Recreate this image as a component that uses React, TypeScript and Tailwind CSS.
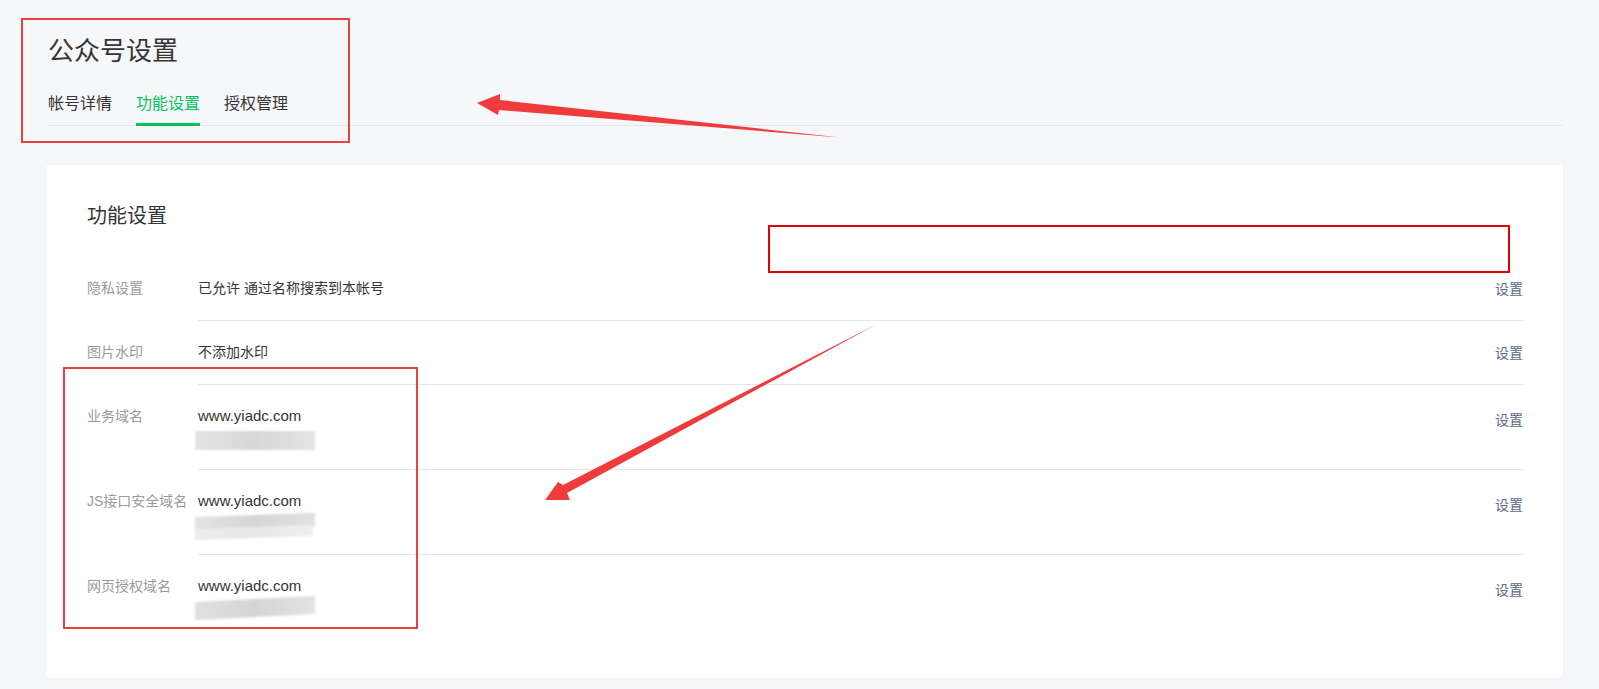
import React from 'react';

type Row = {
  label: string;
  value: string;
  blur?: 'a' | 'b' | 'c';
};

const ROWS: Row[] = [
  { label: '隐私设置', value: '已允许 通过名称搜索到本帐号' },
  { label: '图片水印', value: '不添加水印' },
  { label: '业务域名', value: 'www.yiadc.com', blur: 'a' },
  { label: 'JS接口安全域名', value: 'www.yiadc.com', blur: 'b' },
  { label: '网页授权域名', value: 'www.yiadc.com', blur: 'c' },
];

const TABS = ['帐号详情', '功能设置', '授权管理'];

// smeared-out second line under each domain (redacted in the screenshot)
function Smudge({ kind }: { kind: 'a' | 'b' | 'c' }) {
  if (kind === 'b') {
    return (
      <div className="h-[22px] -ml-[3px] pt-[3px]">
        <div className="w-[120px] h-[14px] bg-gradient-to-r from-[#e4e4e4] via-[#d6d6d6] to-[#e2e2e2] blur-[1px] -skew-y-2" />
        <div className="w-[118px] h-[11px] -mt-[2px] bg-gradient-to-r from-[#ececec] via-[#e8e8e8] to-[#efefef] blur-[1px] -skew-y-2" />
      </div>
    );
  }
  if (kind === 'c') {
    return (
      <div className="h-[22px] -ml-[3px] pt-[2px]">
        <div className="w-[120px] h-[18px] bg-gradient-to-r from-[#e0e0e0] via-[#d5d5d5] to-[#e3e3e3] blur-[1px] -skew-y-3" />
      </div>
    );
  }
  return (
    <div className="h-[22px] -ml-[3px] pt-[4px]">
      <div className="w-[120px] h-[19px] bg-gradient-to-r from-[#e3e3e3] via-[#d7d7d7] to-[#e4e4e4] blur-[1px]" />
    </div>
  );
}

export default function App() {
  return (
    <div
      className="relative min-h-screen w-full bg-[#f6f7f9] overflow-hidden"
      style={{ fontFamily: '"Liberation Sans","Noto Sans CJK SC",sans-serif' }}
    >
      {/* page header + tab strip */}
      <div className="pt-[33px] ml-[48px] mr-[37px]">
        <h1 className="h-[36px] text-[26px] leading-[36px] text-[#353535] font-normal">公众号设置</h1>
        <div className="mt-[23px] flex gap-[24px] border-b border-[#e4e6eb]">
          {TABS.map((t, i) => (
            <div
              key={t}
              className={`relative -mb-px pb-[7px] text-[16px] leading-[24px] border-b-[3px] ${
                i === 1 ? 'border-[#07c160] text-[#07c160]' : 'border-transparent text-[#353535]'
              }`}
            >
              <div className="h-[24px]">{t}</div>
            </div>
          ))}
        </div>
      </div>

      {/* settings card */}
      <div className="mt-[39px] ml-[46px] mr-[36px] bg-white rounded-[4px] shadow-[0_1px_2px_rgba(0,0,0,0.03)] pt-[37px] pb-[39px] pl-[41px] pr-[40px]">
        <h2 className="h-[28px] text-[20px] leading-[28px] text-[#353535] font-normal mb-[27px]">功能设置</h2>
        {ROWS.map((r, i) => (
          <div key={r.label} className="flex">
            <div className="w-[111px] shrink-0 py-[20px] text-[14px] leading-[22px] text-[#9a9a9a]">
              <div className="h-[22px]">{r.label}</div>
            </div>
            <div
              className={`flex-1 flex justify-between items-start py-[20px] ${
                i < ROWS.length - 1 ? 'border-b border-[#e7e7eb]' : ''
              }`}
            >
              <div>
                <div className={`h-[22px] ${r.blur ? 'text-[15px]' : 'text-[14px]'} leading-[22px] text-[#353535]`}>{r.value}</div>
                {r.blur && <Smudge kind={r.blur} />}
              </div>
              <div className={`h-[22px] ${r.blur ? 'mt-[4px]' : 'mt-[1px]'} text-[14px] leading-[22px] text-[#5b6a8c]`}>设置</div>
            </div>
          </div>
        ))}
      </div>

      {/* red annotation marks drawn over the screenshot */}
      <div className="absolute left-[21px] top-[18px] w-[329px] h-[125px] border-[2.5px] border-[#e8413e] pointer-events-none" />
      <div className="absolute left-[63px] top-[367px] w-[355px] h-[262px] border-[2.5px] border-[#e8413e] pointer-events-none" />
      <div className="absolute left-[768px] top-[225px] w-[742px] h-[48px] border-2 border-[#e00000] pointer-events-none" />
      <svg className="absolute inset-0 pointer-events-none" width="1599" height="689" viewBox="0 0 1599 689">
        <polygon points="477,103 500,94 500,100 840,137.5 499,110 498,115" fill="#ef3b3b" />
        <polygon points="545,500 558,482 563,485 877,324 567,493 570,500" fill="#ef3b3b" />
      </svg>
    </div>
  );
}
